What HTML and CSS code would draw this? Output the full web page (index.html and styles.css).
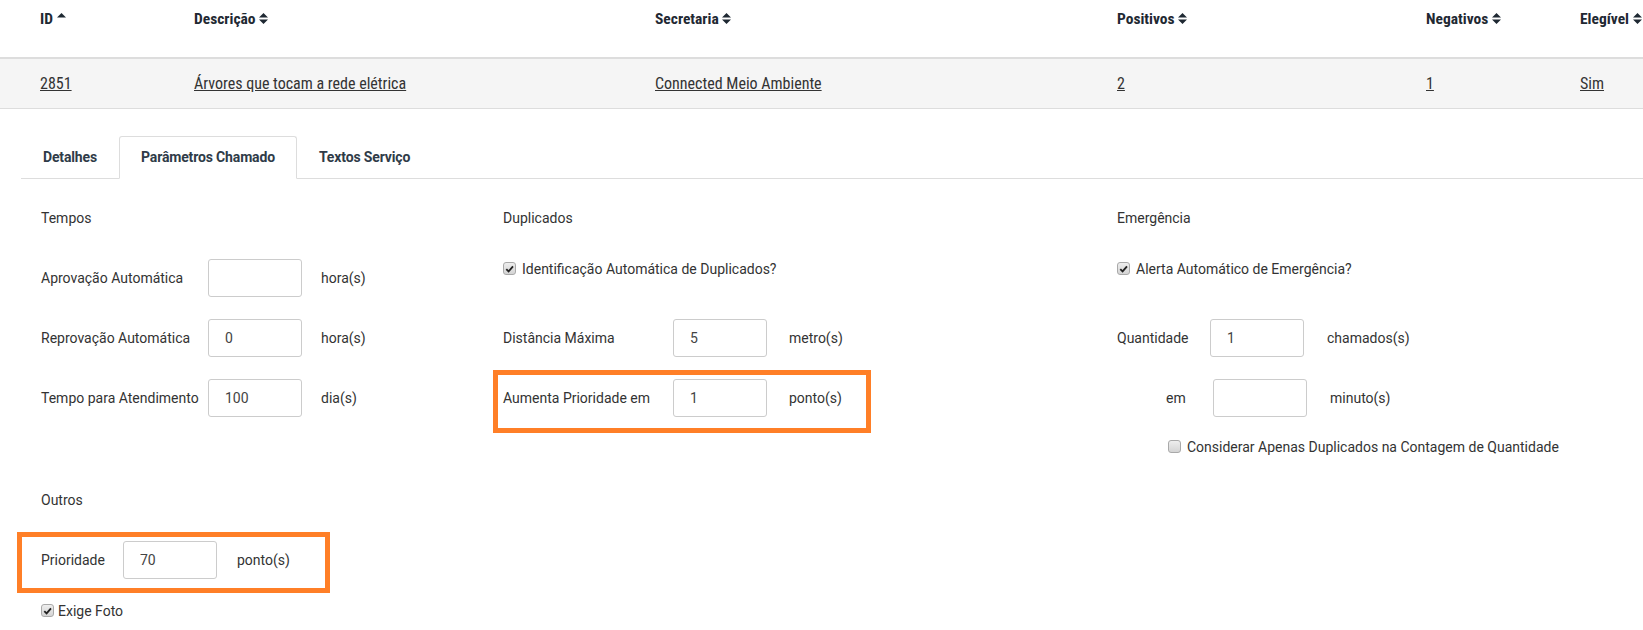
FILE: index.html
```html
<!DOCTYPE html>
<html lang="pt-BR">
<head>
<meta charset="utf-8">
<title>Parâmetros Chamado</title>
<link rel="stylesheet" href="styles.css">
</head>
<body>
<table class="grid">
  <colgroup>
    <col class="c1"><col class="c2"><col class="c3"><col class="c4"><col class="c5"><col class="c6">
  </colgroup>
  <thead>
    <tr>
      <th class="first">ID <svg class="sort" viewBox="0 0 9 13" width="9" height="13"><path d="M0 5.5 L4.5 1 L9 5.5 Z"/></svg></th>
      <th>Descrição <svg class="sort" viewBox="0 0 9 13" width="9" height="13"><path d="M0 5.5 L4.5 1 L9 5.5 Z M0 7.5 L4.5 12 L9 7.5 Z"/></svg></th>
      <th>Secretaria <svg class="sort" viewBox="0 0 9 13" width="9" height="13"><path d="M0 5.5 L4.5 1 L9 5.5 Z M0 7.5 L4.5 12 L9 7.5 Z"/></svg></th>
      <th>Positivos <svg class="sort" viewBox="0 0 9 13" width="9" height="13"><path d="M0 5.5 L4.5 1 L9 5.5 Z M0 7.5 L4.5 12 L9 7.5 Z"/></svg></th>
      <th>Negativos <svg class="sort" viewBox="0 0 9 13" width="9" height="13"><path d="M0 5.5 L4.5 1 L9 5.5 Z M0 7.5 L4.5 12 L9 7.5 Z"/></svg></th>
      <th>Elegível <svg class="sort" viewBox="0 0 9 13" width="9" height="13"><path d="M0 5.5 L4.5 1 L9 5.5 Z M0 7.5 L4.5 12 L9 7.5 Z"/></svg></th>
    </tr>
  </thead>
  <tbody>
    <tr>
      <td class="first"><a href="#">2851</a></td>
      <td><a href="#">Árvores que tocam a rede elétrica</a></td>
      <td><a href="#">Connected Meio Ambiente</a></td>
      <td><a href="#">2</a></td>
      <td><a href="#">1</a></td>
      <td><a href="#">Sim</a></td>
    </tr>
  </tbody>
</table>

<div class="panel">
  <ul class="tabs">
    <li><a href="#">Detalhes</a></li>
    <li class="active"><a href="#">Parâmetros Chamado</a></li>
    <li><a href="#">Textos Serviço</a></li>
  </ul>

  <div class="content">
    <div class="cols">
      <div class="sec">
        <div class="sec-title">Tempos</div>
        <div class="frow first-row">
          <label class="lbl w-tempos">Aprovação Automática</label>
          <input class="inp" type="text" value="">
          <span class="unit u-tempos">hora(s)</span>
        </div>
        <div class="frow">
          <label class="lbl w-tempos">Reprovação Automática</label>
          <input class="inp" type="text" value="0">
          <span class="unit u-tempos">hora(s)</span>
        </div>
        <div class="frow">
          <label class="lbl w-tempos">Tempo para Atendimento</label>
          <input class="inp" type="text" value="100">
          <span class="unit u-tempos">dia(s)</span>
        </div>
      </div>

      <div class="sec">
        <div class="sec-title">Duplicados</div>
        <div class="frow first-row cbrow">
          <span class="cb"><svg viewBox="0 0 12 12" width="12" height="12"><path d="M2.5 6.2 L5 8.7 L9.8 3.2" fill="none" stroke="#222" stroke-width="2"/></svg></span>
          <span class="cbtext">Identificação Automática de Duplicados?</span>
        </div>
        <div class="frow">
          <label class="lbl w-dup">Distância Máxima</label>
          <input class="inp" type="text" value="5">
          <span class="unit u-dup">metro(s)</span>
        </div>
        <div class="frow">
          <span class="hl hl-dup"></span>
          <label class="lbl w-dup">Aumenta Prioridade em</label>
          <input class="inp" type="text" value="1">
          <span class="unit u-dup">ponto(s)</span>
        </div>
      </div>

      <div class="sec">
        <div class="sec-title">Emergência</div>
        <div class="frow first-row cbrow">
          <span class="cb"><svg viewBox="0 0 12 12" width="12" height="12"><path d="M2.5 6.2 L5 8.7 L9.8 3.2" fill="none" stroke="#222" stroke-width="2"/></svg></span>
          <span class="cbtext">Alerta Automático de Emergência?</span>
        </div>
        <div class="frow">
          <label class="lbl w-em">Quantidade</label>
          <input class="inp" type="text" value="1">
          <span class="unit u-em">chamados(s)</span>
        </div>
        <div class="frow">
          <label class="lbl w-em em-indent">em</label>
          <input class="inp" type="text" value="">
          <span class="unit u-em">minuto(s)</span>
        </div>
        <div class="cbline cb-indent">
          <span class="cb"></span>
          <span class="cbtext">Considerar Apenas Duplicados na Contagem de Quantidade</span>
        </div>
      </div>
    </div>

    <div class="sec outros">
      <div class="sec-title">Outros</div>
      <div class="frow first-row">
        <span class="hl hl-out"></span>
        <label class="lbl w-out">Prioridade</label>
        <input class="inp" type="text" value="70">
        <span class="unit u-out">ponto(s)</span>
      </div>
      <div class="cbline foto">
        <span class="cb"><svg viewBox="0 0 12 12" width="12" height="12"><path d="M2.5 6.2 L5 8.7 L9.8 3.2" fill="none" stroke="#222" stroke-width="2"/></svg></span>
        <span class="cbtext tight">Exige Foto</span>
      </div>
    </div>
  </div>
</div>
</body>
</html>
```

FILE: styles.css
```css
html, body {
  margin: 0;
  padding: 0;
  background: #fff;
}
body {
  width: 1643px;
  overflow: hidden;
  font-family: Roboto, "Liberation Sans", sans-serif;
  font-size: 14px;
  color: #333;
}

/* ---------- table ---------- */
.grid {
  border-collapse: collapse;
  table-layout: fixed;
  width: 1643px;
  font-family: "Roboto Condensed", "Liberation Sans Narrow", "Arial Narrow", Roboto, sans-serif;
}
.c1 { width: 194px; }
.c2 { width: 461px; }
.c3 { width: 462px; }
.c4 { width: 309px; }
.c5 { width: 154px; }
.c6 { width: 63px; }

.grid th {
  height: 58px;
  padding: 10px 0 0 0;
  box-sizing: border-box;
  text-align: left;
  vertical-align: top;
  font-size: 15.5px;
  line-height: 18px;
  font-weight: bold;
  color: #1f2933;
  white-space: nowrap;
  border-bottom: 2px solid #dddddd;
}
.grid td {
  height: 49px;
  padding: 0;
  vertical-align: middle;
  background: #f5f5f5;
  border-bottom: 1px solid #dddddd;
  font-size: 16px;
  white-space: nowrap;
}
.grid .first { padding-left: 40px; }
.grid a {
  color: #333;
  text-decoration: underline;
}
.sort {
  fill: #1f2933;
  margin-left: 0;
  vertical-align: -1px;
}

/* ---------- tabs ---------- */
.panel {
  margin: 27px 0 0 21px;
}
.tabs {
  list-style: none;
  margin: 0;
  padding: 0;
  display: flex;
  border-bottom: 1px solid #dddddd;
}
.tabs li {
  margin-bottom: -1px;
}
.tabs a {
  display: block;
  padding: 0 21px;
  height: 41px;
  line-height: 41px;
  border: 1px solid transparent;
  border-radius: 3px 3px 0 0;
  font-weight: bold;
  font-size: 14px;
  letter-spacing: -0.15px;
  color: #2f3b48;
  text-decoration: none;
}
.tabs .active a {
  border-color: #dddddd;
  border-bottom-color: #fff;
  background: #fff;
}

/* ---------- content ---------- */
.content {
  padding-left: 20px;
}
.cols {
  display: grid;
  grid-template-columns: 462px 614px 1fr;
}
.sec-title {
  margin-top: 29px;
  line-height: 20px;
  height: 20px;
}
.frow {
  position: relative;
  display: flex;
  align-items: center;
  height: 38px;
  margin-top: 22px;
}
.frow.first-row {
  margin-top: 31px;
}
.frow.cbrow {
  align-items: flex-start;
  line-height: 20px;
}
.lbl {
  flex: none;
  line-height: 20px;
}
.w-tempos { width: 167px; }
.w-dup { width: 170px; }
.w-em { width: 93px; }
.w-out { width: 82px; }
.em-indent { padding-left: 49px; width: 47px; }

.inp {
  flex: none;
  box-sizing: border-box;
  width: 94px;
  height: 38px;
  margin: 0;
  padding: 0 16px;
  border: 1px solid #cccccc;
  border-radius: 3px;
  background: #fff;
  font-family: Roboto, "Liberation Sans", sans-serif;
  font-size: 14px;
  color: #444;
  outline: none;
}
.unit { line-height: 20px; }
.u-tempos { margin-left: 19px; }
.u-dup { margin-left: 22px; }
.u-em { margin-left: 23px; }
.u-out { margin-left: 20px; }

.cb {
  flex: none;
  display: inline-flex;
  align-items: center;
  justify-content: center;
  box-sizing: border-box;
  width: 13px;
  height: 13px;
  margin-top: 3px;
  border: 1px solid #a9a9a9;
  border-radius: 3px;
  background: linear-gradient(#eeeeee, #d4d4d4);
}
.cb svg { display: block; }
.cbtext { margin-left: 6px; line-height: 20px; }
.cbtext.tight { margin-left: 4px; }
.cbline {
  display: flex;
  align-items: flex-start;
  height: 20px;
  line-height: 20px;
}
.cb-indent {
  margin-top: 20px;
  padding-left: 51px;
}

.outros {
  margin-top: 33px;
}
.foto {
  margin-top: 22px;
}

/* ---------- annotation highlights ---------- */
.hl {
  position: absolute;
  box-sizing: border-box;
  border: 5px solid #ff7f27;
  pointer-events: none;
}
.hl-dup {
  left: -10px;
  top: -9px;
  width: 378px;
  height: 63px;
}
.hl-out {
  left: -24px;
  top: -9px;
  width: 313px;
  height: 61px;
}
```
